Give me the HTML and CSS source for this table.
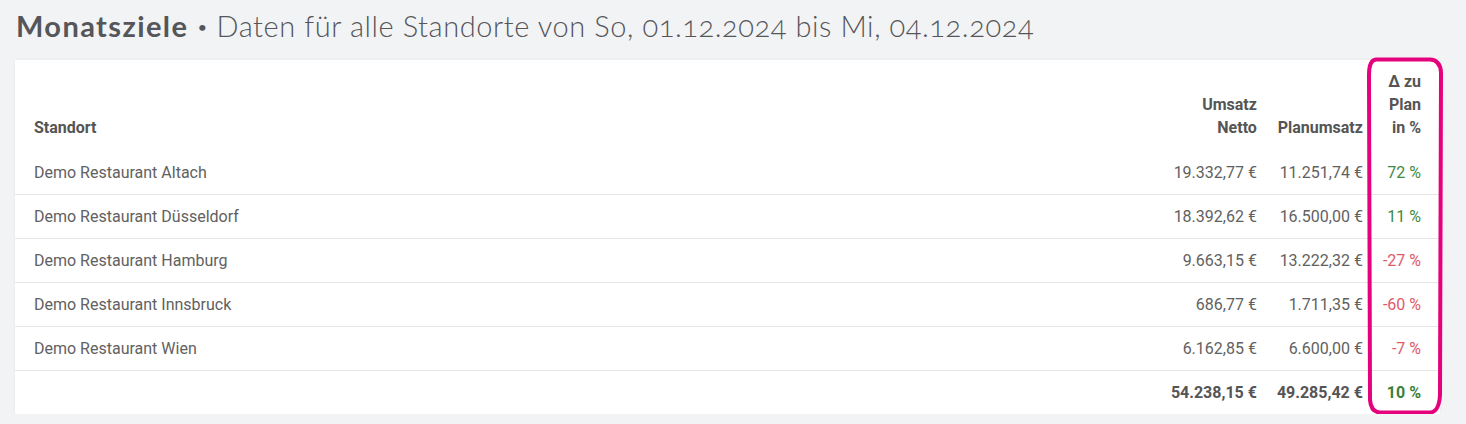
FILE: index.html
```html
<!DOCTYPE html>
<html lang="de">
<head>
<meta charset="utf-8">
<title>Monatsziele</title>
<link rel="stylesheet" href="styles.css">
</head>
<body>
<div class="page">
  <h1 class="title"><span class="title-main">Monatsziele</span><span class="title-dot">•</span><span class="title-sub">Daten für alle Standorte von So, 01.12.2024 bis Mi, 04.12.2024</span></h1>
  <div class="card">
    <table class="goals">
      <thead>
        <tr>
          <th class="col-name">Standort</th>
          <th class="num">Umsatz Netto</th>
          <th class="num">Planumsatz</th>
          <th class="num">Δ zu Plan in %</th>
        </tr>
      </thead>
      <tbody>
        <tr>
          <td>Demo Restaurant Altach</td>
          <td class="num">19.332,77&nbsp;€</td>
          <td class="num">11.251,74&nbsp;€</td>
          <td class="num pos">72&nbsp;%</td>
        </tr>
        <tr>
          <td>Demo Restaurant Düsseldorf</td>
          <td class="num">18.392,62&nbsp;€</td>
          <td class="num">16.500,00&nbsp;€</td>
          <td class="num pos">11&nbsp;%</td>
        </tr>
        <tr>
          <td>Demo Restaurant Hamburg</td>
          <td class="num">9.663,15&nbsp;€</td>
          <td class="num">13.222,32&nbsp;€</td>
          <td class="num neg">-27&nbsp;%</td>
        </tr>
        <tr>
          <td>Demo Restaurant Innsbruck</td>
          <td class="num">686,77&nbsp;€</td>
          <td class="num">1.711,35&nbsp;€</td>
          <td class="num neg">-60&nbsp;%</td>
        </tr>
        <tr>
          <td>Demo Restaurant Wien</td>
          <td class="num">6.162,85&nbsp;€</td>
          <td class="num">6.600,00&nbsp;€</td>
          <td class="num neg">-7&nbsp;%</td>
        </tr>
      </tbody>
      <tfoot>
        <tr>
          <td></td>
          <td class="num">54.238,15&nbsp;€</td>
          <td class="num">49.285,42&nbsp;€</td>
          <td class="num pos">10&nbsp;%</td>
        </tr>
      </tfoot>
    </table>
    <svg class="highlight" width="82" height="362" viewBox="0 0 82 362" aria-hidden="true">
      <path d="M12 4.5 L66 4.5 Q76 5 77 17 L76 340 Q75 357 66 357.5 L16 357.5 Q7 357 6 345 L5 20 Q5 5 12 4.5 Z" fill="none" stroke="#e5007d" stroke-width="4" stroke-linejoin="round"/>
    </svg>
  </div>
</div>
</body>
</html>
```

FILE: styles.css
```css
html, body {
  margin: 0;
  padding: 0;
  background: #f2f3f5;
}

.page {
  padding: 0 26px 0 15px;
}

.title {
  margin: 0;
  height: 50px;
  padding-bottom: 10px;
  display: flex;
  align-items: center;
  padding-left: 1px;
  font-family: Lato, "Open Sans", sans-serif;
  font-size: 29px;
  font-weight: 400;
  color: #555659;
  white-space: nowrap;
  font-variant-numeric: oldstyle-nums;
}

.title-main {
  font-weight: 700;
  letter-spacing: 1.4px;
}

.title-dot {
  font-size: 14px;
  font-weight: 700;
  margin: 3px 10px 0 10px;
}

.title-sub {
  font-weight: 300;
  letter-spacing: 0.58px;
}

.card {
  position: relative;
  background: #ffffff;
  box-shadow: 0 0 3px rgba(0, 0, 0, 0.06);
}

.goals {
  width: 100%;
  border-collapse: collapse;
  font-family: Roboto, "Liberation Sans", sans-serif;
  font-size: 16px;
  line-height: 23px;
  color: #616161;
}

.goals th,
.goals td {
  padding: 10px;
  text-align: left;
  vertical-align: bottom;
}

.goals th {
  padding-bottom: 12px;
  font-weight: 700;
  color: #555555;
}

.goals th:first-child,
.goals td:first-child {
  padding-left: 19px;
}

.goals th:last-child,
.goals td:last-child {
  padding-right: 19px;
}

.goals .col-name {
  width: 100%;
}

.goals tbody td {
  vertical-align: middle;
  border-bottom: 1px solid #e6e6e6;
}

.goals tfoot td {
  font-weight: 700;
  color: #555555;
}

.goals .num {
  text-align: right;
}

.goals td.num {
  white-space: nowrap;
}

.goals .pos {
  color: #3e8a3e;
}

.goals .neg {
  color: #e2596a;
}

.goals tfoot .pos {
  color: #3a7f3a;
}

.highlight {
  position: absolute;
  top: -5px;
  right: -6px;
  pointer-events: none;
}
```
